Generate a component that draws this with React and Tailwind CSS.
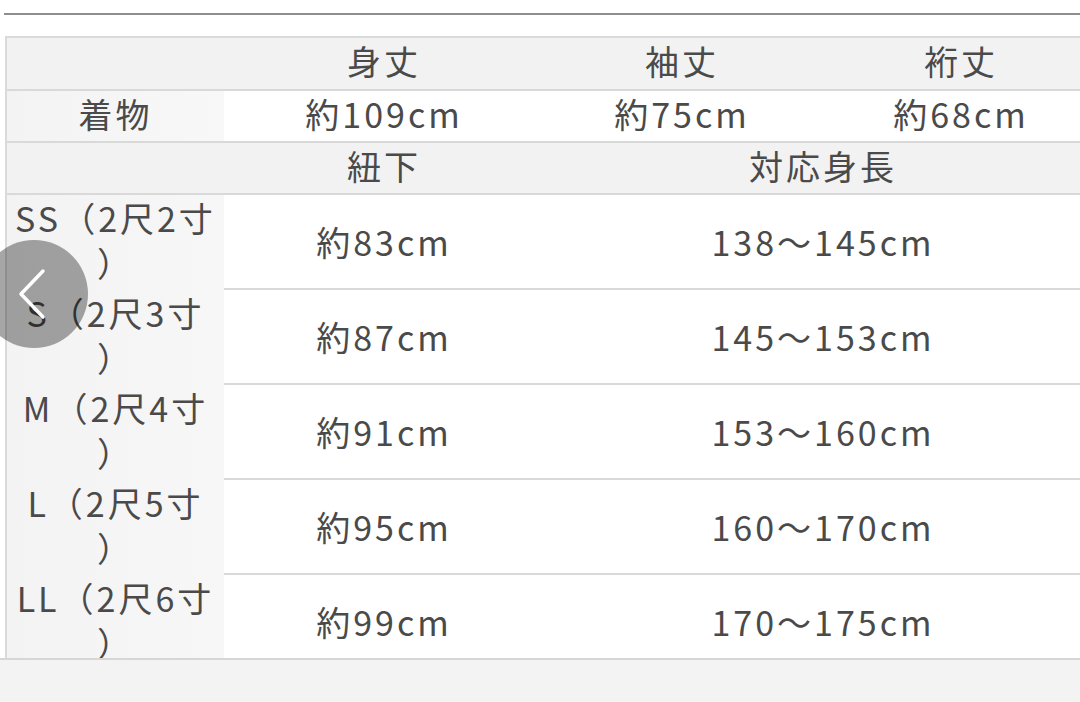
import React from 'react';

const font = { fontFamily: '"Noto Sans CJK JP", "Noto Sans", sans-serif' };

const sizes = [
  { label: 'SS（2尺2寸', himo: '約83cm', height: '138〜145cm' },
  { label: 'S（2尺3寸', himo: '約87cm', height: '145〜153cm' },
  { label: 'M（2尺4寸', himo: '約91cm', height: '153〜160cm' },
  { label: 'L（2尺5寸', himo: '約95cm', height: '160〜170cm' },
  { label: 'LL（2尺6寸', himo: '約99cm', height: '170〜175cm' },
];

const cell = 'flex items-center justify-center pb-[5px]';

const App = () => {
  return (
    <div className="w-[1080px] h-[702px] overflow-hidden bg-white flex flex-col text-[#4a4a4a]" style={font}>
      <div className="h-[13px] shrink-0"></div>
      <div className="h-[2px] ml-[4px] bg-[#8e8e8e] shrink-0"></div>
      <div className="h-[21px] shrink-0"></div>

      <div className="relative flex-1 overflow-hidden">
        <div className="ml-[5px] w-[1095px] border-l-2 border-t-2 border-[#dadada] text-[34px] tracking-[3px] leading-none">
          <div className="grid grid-cols-[217px_320px_276px_282px] h-[53px] bg-[#f2f2f2] border-b-2 border-[#d9d9d9]">
            <div></div>
            <div className={cell}>身丈</div>
            <div className={cell}>袖丈</div>
            <div className={cell}>裄丈</div>
          </div>
          <div className="grid grid-cols-[217px_320px_276px_282px] h-[52px] border-b-2 border-[#d9d9d9]">
            <div className="flex items-center justify-center pb-[5px] bg-gradient-to-r from-[#f3f3f3] to-[#f8f8f8]">着物</div>
            <div className={cell}>約109cm</div>
            <div className={cell}>約75cm</div>
            <div className={cell}>約68cm</div>
          </div>
          <div className="grid grid-cols-[217px_320px_558px] h-[52px] bg-[#f2f2f2] border-b-2 border-[#d9d9d9]">
            <div></div>
            <div className={cell}>紐下</div>
            <div className={cell}>対応身長</div>
          </div>
          {sizes.map((s) => (
            <div key={s.label} className="grid grid-cols-[217px_320px_558px] h-[95px] border-b-2 border-[#d9d9d9]">
              <div className="flex flex-col items-center justify-center pb-[8px] bg-gradient-to-r from-[#f3f3f3] to-[#f7f7f7] leading-[45px] whitespace-nowrap">
                <span>{s.label}</span>
                <span>）</span>
              </div>
              <div className={cell}>{s.himo}</div>
              <div className={cell}>{s.height}</div>
            </div>
          ))}
        </div>

        <div className="absolute left-[-20px] top-[204px] w-[108px] h-[108px] rounded-full bg-black/35 flex items-center justify-center">
          <svg width="30" height="52" viewBox="0 0 30 52" className="-ml-[4px]">
            <path d="M26 3 L4 26 L26 49" fill="none" stroke="white" strokeWidth="3.5" strokeLinecap="round" strokeLinejoin="round" />
          </svg>
        </div>
      </div>

      <div className="h-[44px] shrink-0 bg-[#f3f3f3] border-t-2 border-[#d6d6d6]"></div>
    </div>
  );
};

export default App;
